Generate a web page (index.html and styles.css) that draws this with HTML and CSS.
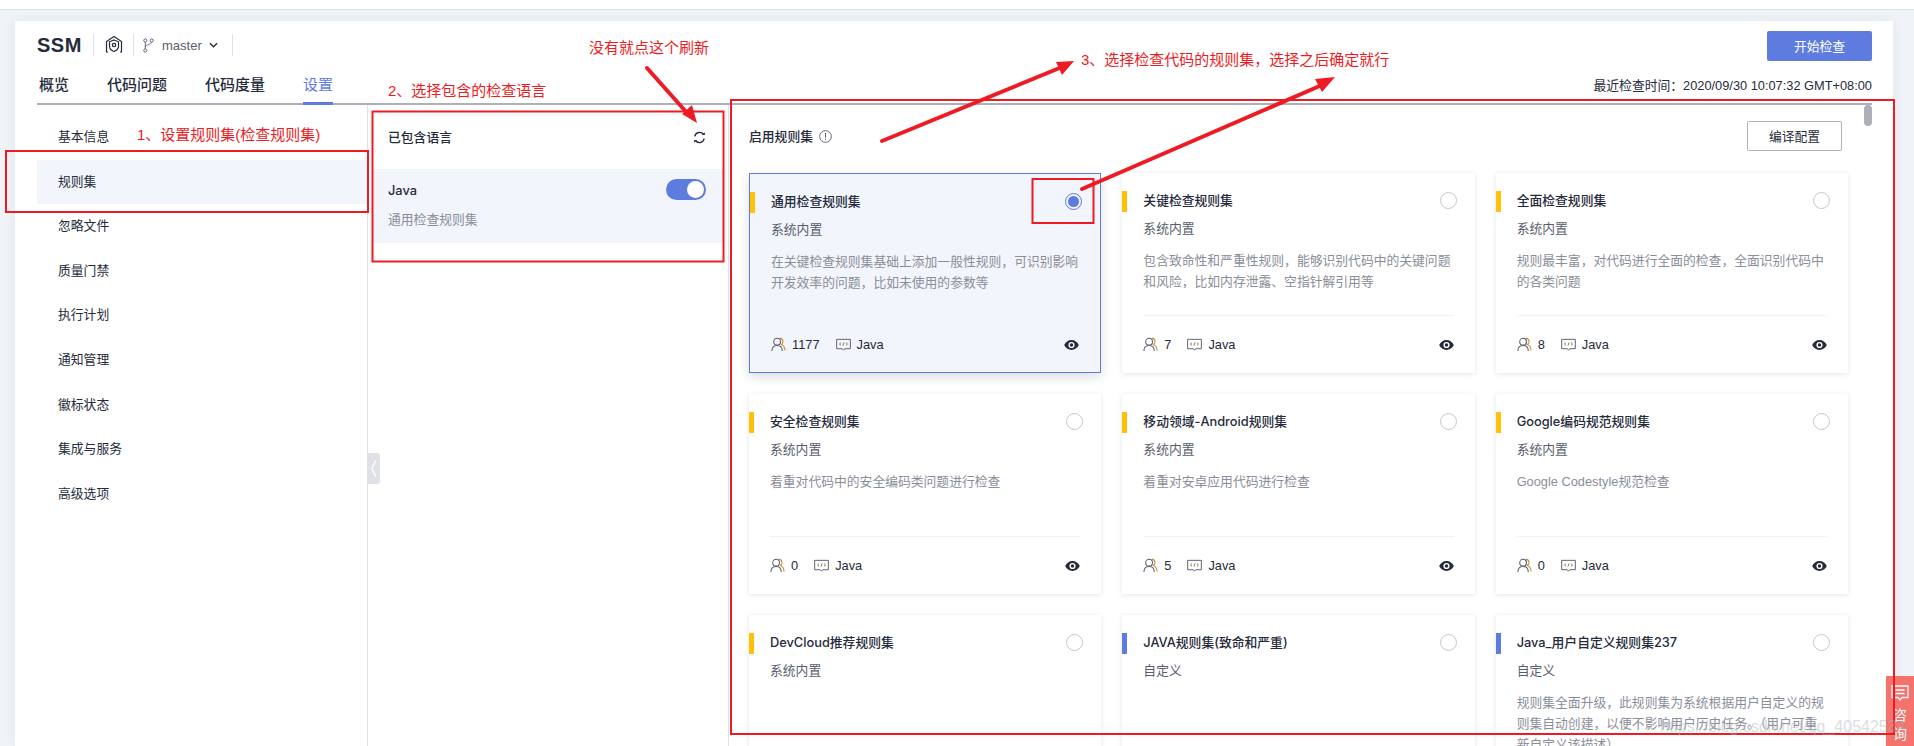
FILE: index.html
```html
<!DOCTYPE html>
<html lang="zh-CN">
<head>
<meta charset="utf-8">
<title>SSM 设置</title>
<link rel="stylesheet" href="styles.css">
</head>
<body>
<svg class="defs" width="0" height="0" aria-hidden="true">
  <symbol id="i-user" viewBox="0 0 16 16"><g fill="none" stroke="#575d6c" stroke-width="1.1"><circle cx="6.5" cy="5" r="3.6"/><path d="M1 15c0-3.6 2.3-6 5.5-6s5.5 2.4 5.5 6"/><path d="M9.5 1.2c2 .3 3.3 1.8 3.3 3.6 0 1.4-.7 2.5-1.8 3.2 2.4 1 3.9 3.300 4 6.500" stroke="#c78a3c"/></g></symbol>
  <symbol id="i-code" viewBox="0 0 16 16"><g fill="none" stroke="#575d6c" stroke-width="1"><path d="M.7 2.500h14.600v10h-6l-1.300 1.600-1.300-1.600h-6z"/><path d="M5.300 6l-1.600 1.500 1.600 1.500M10.700 6l1.600 1.500-1.600 1.500M8.600 5.800l-1.200 3.400" stroke="#8a6d3c"/></g></symbol>
  <symbol id="i-eye" viewBox="0 0 16 12"><path fill-rule="evenodd" fill="#252b3a" d="M8 .7C4.500.7 1.600 2.900.2 6c1.400 3.100 4.300 5.300 7.800 5.300s6.400-2.200 7.800-5.300C14.400 2.900 11.500.7 8 .7zm0 2a3.300 3.300 0 1 1 0 6.600 3.300 3.300 0 0 1 0-6.600z"/><circle cx="8" cy="6" r="1.800" fill="#252b3a"/></symbol>
</svg>

<div class="topstrip"></div>
<main class="page">
  <header class="head">
    <div class="head-top">
      <div class="crumbs">
        <span class="project">SSM</span>
        <span class="crumb">
          <svg class="shield" viewBox="0 0 20 20" width="20" height="20"><g fill="none" stroke="#252b3a" stroke-width="1.200"><path d="M4 17H2.500V6.500L10 1.500l7.500 5V17H16"/><path d="M10 5l4.500 1.800v4.400c0 2.500-2 4.300-4.500 5.300-2.500-1-4.500-2.800-4.500-5.300V6.800z"/><circle cx="10" cy="10" r="1.700"/></g></svg>
        </span>
        <span class="crumb branch">
          <svg viewBox="0 0 12 16" width="11" height="15"><g fill="none" stroke="#575d6c" stroke-width="1"><circle cx="2.500" cy="2.500" r="1.700"/><circle cx="9.500" cy="2.500" r="1.700"/><circle cx="2.500" cy="13.500" r="1.700"/><path d="M2.500 4.200v7.600M9.500 4.200c0 3-7 2.500-7 5.500"/></g></svg>
          <span class="branch-name">master</span>
          <svg viewBox="0 0 10 6" width="9" height="6"><path d="M1 1l4 4 4-4" fill="none" stroke="#252b3a" stroke-width="1.500"/></svg>
        </span>
      </div>
      <button class="btn-primary">开始检查</button>
    </div>
    <div class="head-tabs">
      <nav class="tabs">
        <a class="tab">概览</a>
        <a class="tab">代码问题</a>
        <a class="tab">代码度量</a>
        <a class="tab tab-active">设置</a>
      </nav>
      <span class="last-time">最近检查时间：2020/09/30 10:07:32 GMT+08:00</span>
    </div>
  </header>

  <div class="content">
    <aside class="sidebar">
      <a class="side-item">基本信息</a>
      <a class="side-item side-active">规则集</a>
      <a class="side-item">忽略文件</a>
      <a class="side-item">质量门禁</a>
      <a class="side-item">执行计划</a>
      <a class="side-item">通知管理</a>
      <a class="side-item">徽标状态</a>
      <a class="side-item">集成与服务</a>
      <a class="side-item">高级选项</a>
      <span class="collapse"><svg viewBox="0 0 8 20" width="7" height="19"><path d="M6.500 1L2 10l4.500 9" fill="none" stroke="#fff" stroke-width="1.500"/></svg></span>
    </aside>

    <section class="langs">
      <div class="langs-head">
        <span class="panel-title">已包含语言</span>
        <svg viewBox="0 0 16 16" width="13" height="13"><g fill="none" stroke="#252b3a" stroke-width="1.700"><path d="M2.200 6.500A6 6 0 0 1 13 4.300"/><path d="M13.800 9.500A6 6 0 0 1 3 11.700"/></g><path d="M11 5h3.600V1.400zM5 11H1.400v3.600z" fill="#252b3a"/></svg>
      </div>
      <div class="lang-row">
        <div class="lang-top">
          <span class="lang-name">Java</span>
          <span class="toggle"><span class="toggle-thumb"></span></span>
        </div>
        <div class="lang-sub">通用检查规则集</div>
      </div>
    </section>

    <section class="rules">
      <div class="rules-head">
        <span class="rules-title">
          <span class="panel-title">启用规则集</span>
          <svg viewBox="0 0 14 14" width="13" height="13"><circle cx="7" cy="7" r="6.300" fill="none" stroke="#575d6c"/><path d="M7 3.300v5M7 9.500v1.300" stroke="#575d6c" stroke-width="1.100"/></svg>
        </span>
        <button class="btn-outline">编译配置</button>
      </div>
      <div class="grid">
        <article class="card card-selected">
          <div class="card-title"><span>通用检查规则集</span><span class="radio radio-on"></span></div>
          <div class="card-sub">系统内置</div>
          <div class="card-desc">在关键检查规则集基础上添加一般性规则，可识别影响开发效率的问题，比如未使用的参数等</div>
          <div class="card-foot"><svg class="fi"><use href="#i-user"/></svg><span class="count">1177</span><svg class="fi"><use href="#i-code"/></svg><span>Java</span><svg class="eye"><use href="#i-eye"/></svg></div>
        </article>
        <article class="card">
          <div class="card-title"><span>关键检查规则集</span><span class="radio"></span></div>
          <div class="card-sub">系统内置</div>
          <div class="card-desc">包含致命性和严重性规则，能够识别代码中的关键问题和风险，比如内存泄露、空指针解引用等</div>
          <div class="card-foot"><svg class="fi"><use href="#i-user"/></svg><span class="count">7</span><svg class="fi"><use href="#i-code"/></svg><span>Java</span><svg class="eye"><use href="#i-eye"/></svg></div>
        </article>
        <article class="card">
          <div class="card-title"><span>全面检查规则集</span><span class="radio"></span></div>
          <div class="card-sub">系统内置</div>
          <div class="card-desc">规则最丰富，对代码进行全面的检查，全面识别代码中的各类问题</div>
          <div class="card-foot"><svg class="fi"><use href="#i-user"/></svg><span class="count">8</span><svg class="fi"><use href="#i-code"/></svg><span>Java</span><svg class="eye"><use href="#i-eye"/></svg></div>
        </article>
        <article class="card">
          <div class="card-title"><span>安全检查规则集</span><span class="radio"></span></div>
          <div class="card-sub">系统内置</div>
          <div class="card-desc">着重对代码中的安全编码类问题进行检查</div>
          <div class="card-foot"><svg class="fi"><use href="#i-user"/></svg><span class="count">0</span><svg class="fi"><use href="#i-code"/></svg><span>Java</span><svg class="eye"><use href="#i-eye"/></svg></div>
        </article>
        <article class="card">
          <div class="card-title"><span>移动领域-Android规则集</span><span class="radio"></span></div>
          <div class="card-sub">系统内置</div>
          <div class="card-desc">着重对安卓应用代码进行检查</div>
          <div class="card-foot"><svg class="fi"><use href="#i-user"/></svg><span class="count">5</span><svg class="fi"><use href="#i-code"/></svg><span>Java</span><svg class="eye"><use href="#i-eye"/></svg></div>
        </article>
        <article class="card">
          <div class="card-title"><span>Google编码规范规则集</span><span class="radio"></span></div>
          <div class="card-sub">系统内置</div>
          <div class="card-desc">Google Codestyle规范检查</div>
          <div class="card-foot"><svg class="fi"><use href="#i-user"/></svg><span class="count">0</span><svg class="fi"><use href="#i-code"/></svg><span>Java</span><svg class="eye"><use href="#i-eye"/></svg></div>
        </article>
        <article class="card">
          <div class="card-title"><span>DevCloud推荐规则集</span><span class="radio"></span></div>
          <div class="card-sub">系统内置</div>
        </article>
        <article class="card card-custom">
          <div class="card-title"><span>JAVA规则集(致命和严重)</span><span class="radio"></span></div>
          <div class="card-sub">自定义</div>
        </article>
        <article class="card card-custom">
          <div class="card-title"><span>Java_用户自定义规则集237</span><span class="radio"></span></div>
          <div class="card-sub">自定义</div>
          <div class="card-desc">规则集全面升级，此规则集为系统根据用户自定义的规则集自动创建，以便不影响用户历史任务。（用户可重新自定义该描述）</div>
        </article>
      </div>
      <span class="scrollbar"></span>
    </section>
  </div>
</main>

<div class="consult">
  <svg viewBox="0 0 18 18" width="18" height="18"><g fill="none" stroke="#fff" stroke-width="1.300"><path d="M1 2h16v11.500h-6L9 16l-2-2.500H1z"/><path d="M4.500 6h9M4.500 9.500h9"/></g></svg>
  <span class="consult-text">咨询</span>
</div>

<div class="marks">
  <svg class="arrows" width="1914" height="746" viewBox="0 0 1914 746" aria-hidden="true">
    <g fill="none" stroke="#ed1c24" stroke-width="2">
      <rect class="mark" x="6" y="151" width="362" height="61"/>
      <rect class="mark" x="372.500" y="111.500" width="351" height="150"/>
      <rect class="mark" x="731" y="100" width="1163" height="634"/>
      <rect class="mark" x="1032.500" y="179" width="61" height="44"/>
    </g>
    <g stroke="#ed1c24" stroke-width="4" stroke-linecap="round">
      <path d="M647 68L688 114"/>
      <path d="M882 141L1062 67"/>
      <path d="M1082 189L1322 85"/>
    </g>
    <g fill="#ed1c24">
      <path d="M697 123l-15-9 10-9z"/>
      <path d="M1074 61l-12 14-6-13z"/>
      <path d="M1335 77l-13 15-7-13z"/>
    </g>
  </svg>
  <span class="note note-1">1、设置规则集(检查规则集)</span>
  <span class="note note-2">2、选择包含的检查语言</span>
  <span class="note note-3">3、选择检查代码的规则集，选择之后确定就行</span>
  <span class="note note-r">没有就点这个刷新</span>
  <span class="watermark">https://blog.csdn.net/qq_40542534</span>
</div>
</body>
</html>
```

FILE: styles.css
```css
* { box-sizing: border-box; }
html, body { margin: 0; height: 746px; overflow: hidden; }
body {
  position: relative;
  display: flex;
  flex-direction: column;
  background: #f0f4f8;
  color: #252b3a;
  font: 12.8px/21px "Liberation Sans", "Noto Sans CJK SC", sans-serif;
}
.defs { position: absolute; }
button { font: inherit; cursor: pointer; }

.topstrip { height: 10px; flex: none; background: #fff; border-bottom: 1px solid #dcdfe6; }
.page {
  flex: 1;
  min-height: 0;
  margin: 11px 21px 0 15px;
  padding: 0 21px 0 22px;
  display: flex;
  flex-direction: column;
  background: #fff;
  box-shadow: 0 0 12px rgba(37, 43, 58, .07);
}

.head { flex: none; border-bottom: 2px solid #adb0b8; height: 84px; }
.head-top { height: 40px; padding-top: 10px; display: flex; justify-content: space-between; align-items: flex-start; }
.crumbs { display: flex; align-items: center; height: 28px; }
.project { font-size: 20px; font-weight: 700; width: 56px; letter-spacing: .5px; }
.crumb { display: flex; align-items: center; height: 22px; border-left: 1px solid #dfe1e6; }
.shield { margin: 0 9px 0 10px; }
.branch { padding: 0 14px 0 9px; border-right: 1px solid #dfe1e6; }
.branch-name { font-size: 13px; color: #575d6c; margin: 0 7px 0 8px; }
.btn-primary {
  width: 105px; height: 30px; border: 0; border-radius: 2px;
  background: #5e7ce0; color: #fff;
}
.head-tabs { height: 42px; display: flex; justify-content: space-between; align-items: flex-end; }
.tabs { display: flex; gap: 38px; padding-left: 2px; }
.tab { font-size: 15px; font-weight: 500; height: 42px; line-height: 48px; }
.tab-active { color: #5e7ce0; font-weight: 400; border-bottom: 3px solid #5e7ce0; margin-bottom: -2px; height: 44px; }
.last-time { height: 30px; line-height: 30px; margin-bottom: 2px; color: #252b3a; }

.content { flex: 1; min-height: 0; display: flex; }
.sidebar { position: relative; flex: none; width: 331px; padding-top: 10px; border-right: 1px solid #dfe1e6; }
.side-item { display: block; height: 44.6px; line-height: 44.6px; padding-left: 21px; color: #252b3a; }
.side-active { background: #f2f5fc; }
.collapse {
  position: absolute; left: 330px; top: 348px;
  width: 13px; height: 31px;
  display: flex; align-items: center; justify-content: center;
  background: #dfe1e6; border-radius: 0 3px 3px 0;
}

.langs { flex: none; width: 361px; padding: 0 4px; border-right: 1px solid #dfe1e6; }
.langs-head { height: 64px; padding: 0 18px 0 16px; display: flex; align-items: center; justify-content: space-between; }
.panel-title { font-weight: 500; }
.lang-row { height: 74px; background: #f2f5fc; padding: 10px 18px 0 16px; }
.lang-top { display: flex; align-items: center; justify-content: space-between; height: 21px; }
.lang-name { font-family: Inter, "Liberation Sans", sans-serif; font-weight: 500; padding-top: 2px; }
.toggle { width: 40px; height: 21px; border-radius: 11px; background: #5e7ce0; padding: 2px; display: flex; justify-content: flex-end; }
.toggle-thumb { width: 17px; height: 17px; border-radius: 50%; background: #fff; }
.lang-sub { margin-top: 9px; color: #8a8e99; }

.rules { position: relative; flex: 1; min-width: 0; padding-left: 20px; padding-right: 24px; }
.rules-head { height: 68px; display: flex; align-items: flex-start; justify-content: space-between; padding-right: 6px; }
.rules-title { display: flex; align-items: center; gap: 6px; height: 62px; }
.btn-outline { width: 95px; height: 30px; margin-top: 16px; background: #fff; border: 1px solid #adb0b8; border-radius: 2px; color: #252b3a; }
.scrollbar { position: absolute; right: 0; top: 0; width: 8px; height: 21px; border-radius: 4px; background: #adb0b8; }

.grid { display: grid; grid-template-columns: repeat(3, 1fr); gap: 21px; }
.card {
  position: relative;
  height: 200px;
  padding: 17px 21px 0;
  display: flex;
  flex-direction: column;
  background: #fff;
  box-shadow: 0 1px 5px rgba(37, 43, 58, .12);
}
.card::before { content: ""; position: absolute; left: 0; top: 18px; width: 5px; height: 21px; background: #ffc107; }
.card-custom::before { background: #5e7ce0; }
.card-selected { border: 1px solid #5e7ce0; background: #f2f5fc; box-shadow: 0 4px 10px rgba(37, 43, 58, .16); }
.card-title {
  flex: none; height: 21px;
  display: flex; align-items: center; justify-content: space-between;
  font-family: Inter, "Noto Sans CJK SC", sans-serif;
  font-weight: 500;
}
.radio { width: 17px; height: 17px; margin-right: -3px; border: 1px solid #c5c7cc; border-radius: 50%; background: #fff; }
.radio-on { border-color: #5e7ce0; padding: 2px; background: #fff; background-clip: content-box; }
.radio-on::after { content: ""; display: block; width: 11px; height: 11px; border-radius: 50%; background: #5e7ce0; }
.card-sub { flex: none; margin-top: 7px; color: #575d6c; }
.card-desc { flex: none; height: 65px; margin-top: 11px; color: #8a8e99; }
.card-foot { flex: 1; display: flex; align-items: center; border-top: 1px solid #f2f2f3; }
.fi { width: 15px; height: 15px; flex: none; margin-right: 6px; }
.count { margin-right: 16px; }
.eye { width: 15px; height: 12px; margin-left: auto; }

.consult {
  position: absolute; right: 0; bottom: 0;
  width: 28px; height: 70px; padding-top: 8px;
  display: flex; flex-direction: column; align-items: center;
  background: #f4736c; color: #fff;
}
.consult-text { width: 14px; margin-top: 4px; font-size: 14px; line-height: 19px; text-align: center; }

.marks { position: absolute; left: 0; top: 0; width: 1914px; height: 746px; pointer-events: none; }
.arrows { position: absolute; left: 0; top: 0; }
.note { position: absolute; font-size: 15px; line-height: 20px; color: #ed1c24; white-space: nowrap; }
.note-1 { left: 137px; top: 125px; }
.note-2 { left: 388px; top: 81px; }
.note-3 { left: 1081px; top: 50px; }
.note-r { left: 589px; top: 38px; }
.watermark { position: absolute; left: 1660px; top: 716px; font-size: 16px; line-height: 22px; color: rgba(170, 175, 185, .45); white-space: nowrap; }
```
